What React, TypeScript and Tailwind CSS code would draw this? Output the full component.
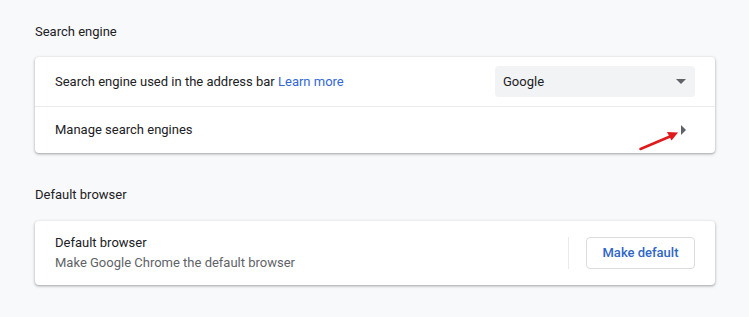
export default function App() {
  return (
    <div
      className="w-[749px] h-[317px] bg-[#f8f9fa] px-[35px] pt-[22px] text-[13px] text-[#202124]"
      style={{ fontFamily: "Roboto, 'Liberation Sans', sans-serif" }}
    >
      {/* Search engine */}
      <h2 className="h-[20px] leading-[20px] font-normal text-[13px] text-[#202124] mb-[15px]">
        Search engine
      </h2>
      <div className="w-[680px] bg-white rounded-[4px] shadow-[0_1px_2px_0_rgba(60,64,67,0.3),0_1px_3px_1px_rgba(60,64,67,0.15)]">
        <div className="h-[49px] flex items-center pl-[20px] pr-[20px]">
          <span className="flex-1">
            Search engine used in the address bar{" "}
            <span className="text-[#3367d6]">Learn more</span>
          </span>
          <div className="w-[200px] h-[31px] bg-[#f1f3f4] rounded-[4px] flex items-center pl-[8px] pr-[9px]">
            <span className="flex-1">Google</span>
            <svg width="10" height="5" viewBox="0 0 10 5">
              <path d="M0 0 L10 0 L5 5 Z" fill="#5f6368" />
            </svg>
          </div>
        </div>
        <div className="h-[47px] border-t border-[#e8eaed] flex items-center pl-[20px] pr-[29px] relative">
          <span className="flex-1">Manage search engines</span>
          <svg width="5" height="10" viewBox="0 0 5 10">
            <path d="M0 0 L5 5 L0 10 Z" fill="#5f6368" />
          </svg>
          <svg
            className="absolute left-[604px] top-[21px]"
            width="42"
            height="24"
            viewBox="0 0 42 24"
          >
            <line x1="1.5" y1="21" x2="31" y2="8.5" stroke="#e01b1b" strokeWidth="2.5" strokeLinecap="round" />
            <path d="M39 4.5 L28 4 L32.5 12.5 Z" fill="#e01b1b" />
          </svg>
        </div>
      </div>

      {/* Default browser */}
      <h2 className="h-[20px] leading-[20px] font-normal text-[13px] text-[#202124] mt-[32px] mb-[16px]">
        Default browser
      </h2>
      <div className="w-[680px] h-[64px] bg-white rounded-[4px] shadow-[0_1px_2px_0_rgba(60,64,67,0.3),0_1px_3px_1px_rgba(60,64,67,0.15)] flex items-center pl-[20px] pr-[20px]">
        <div className="flex-1 flex flex-col">
          <span className="leading-[20px]">Default browser</span>
          <span className="leading-[20px] text-[#5f6368]">Make Google Chrome the default browser</span>
        </div>
        <div className="w-px h-[32px] bg-[#e8eaed] mr-[17px]" />
        <button
          type="button"
          className="w-[109px] h-[32px] border border-[#dadce0] rounded-[4px] bg-white text-[#2f66c8] font-medium text-[13px]"
        >
          Make default
        </button>
      </div>
    </div>
  );
}
